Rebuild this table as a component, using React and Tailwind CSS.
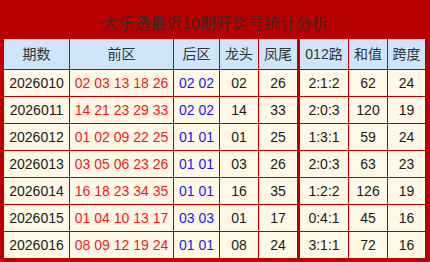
import React from "react";

const rows = [
  { qi: "2026010", front: "02 03 13 18 26", back: "02 02", head: "02", tail: "26", road: "2:1:2", sum: "62", span: "24" },
  { qi: "2026011", front: "14 21 23 29 33", back: "02 02", head: "14", tail: "33", road: "2:0:3", sum: "120", span: "19" },
  { qi: "2026012", front: "01 02 09 22 25", back: "01 01", head: "01", tail: "25", road: "1:3:1", sum: "59", span: "24" },
  { qi: "2026013", front: "03 05 06 23 26", back: "01 01", head: "03", tail: "26", road: "2:0:3", sum: "63", span: "23" },
  { qi: "2026014", front: "16 18 23 34 35", back: "01 01", head: "16", tail: "35", road: "1:2:2", sum: "126", span: "19" },
  { qi: "2026015", front: "01 04 10 13 17", back: "03 03", head: "01", tail: "17", road: "0:4:1", sum: "45", span: "16" },
  { qi: "2026016", front: "08 09 12 19 24", back: "01 01", head: "08", tail: "24", road: "3:1:1", sum: "72", span: "16" },
];

const headers = ["期数", "前区", "后区", "龙头", "凤尾", "012路", "和值", "跨度"];

const font = { fontFamily: '"Liberation Sans", "Noto Sans CJK SC", sans-serif' };

const App = () => {
  return (
    <div className="w-[430px] h-[262px] bg-[#b80000] flex flex-col" style={font}>
      <div
        className="h-[38px] flex items-center justify-center text-[16px] text-[#4a2020] pt-[6px]"
        style={{ fontFamily: '"Noto Sans CJK SC", sans-serif' }}
      >
        大乐透最近10期开奖号统计分析
      </div>
      <div className="grid grid-cols-[65px_103px_45px_38px_40px_48px_38px_37px] grid-rows-[30px_repeat(7,26px)] gap-px pl-[4px] pr-[5px] pt-px">
        {headers.map((h, i) => (
          <div
            key={h}
            className={`bg-[#cfe5fa] text-[#333] text-[14px] flex items-center justify-center ${
              i === 4 ? "mr-[2px]" : ""
            }`}
          >
            {h}
          </div>
        ))}
        {rows.map((r) => (
          <React.Fragment key={r.qi}>
            <div className="bg-[#fff8e6] text-[#1a1a1a] text-[14px] flex items-center justify-center">{r.qi}</div>
            <div className="bg-[#fff8e6] text-[#f01a1a] text-[14px] flex items-center justify-center whitespace-pre">{r.front}</div>
            <div className="bg-[#fff8e6] text-[#1a1aee] text-[14px] flex items-center justify-center whitespace-pre">{r.back}</div>
            <div className="bg-[#fff8e6] text-[#1a1a1a] text-[14px] flex items-center justify-center">{r.head}</div>
            <div className="bg-[#fff8e6] text-[#1a1a1a] text-[14px] flex items-center justify-center mr-[2px]">{r.tail}</div>
            <div className="bg-[#fff8e6] text-[#1a1a1a] text-[14px] flex items-center justify-center">{r.road}</div>
            <div className="bg-[#fff8e6] text-[#1a1a1a] text-[14px] flex items-center justify-center">{r.sum}</div>
            <div className="bg-[#fff8e6] text-[#1a1a1a] text-[14px] flex items-center justify-center">{r.span}</div>
          </React.Fragment>
        ))}
      </div>
    </div>
  );
};

export default App;
